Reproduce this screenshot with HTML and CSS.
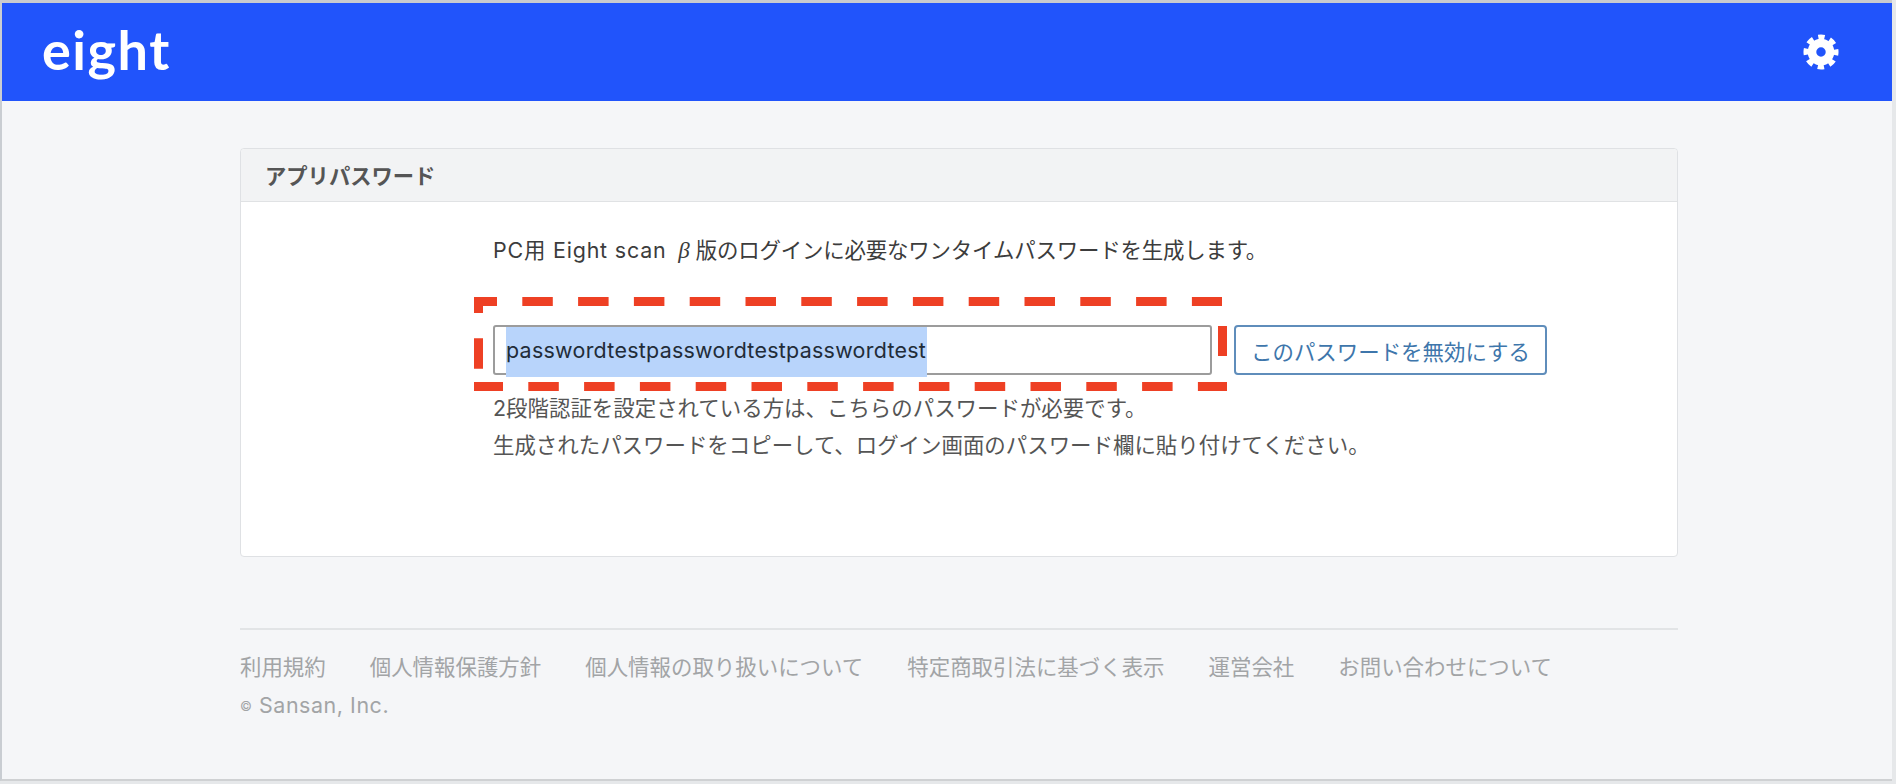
FILE: index.html
```html
<!DOCTYPE html>
<html lang="ja">
<head>
<meta charset="utf-8">
<title>アプリパスワード</title>
<link rel="stylesheet" href="styles.css">
</head>
<body>
<div class="window">
  <header class="topbar">
    <a class="logo">eight</a>
    <svg class="gear" viewBox="0 0 38 38" aria-hidden="true">
      <circle class="gear-ring" cx="19" cy="19" r="9.5"/>
      <circle class="gear-teeth" cx="19" cy="19" r="15.5"/>
    </svg>
  </header>
  <main class="content">
    <section class="card">
      <h1 class="card-head">アプリパスワード</h1>
      <div class="card-body">
        <p class="lead"><span class="lead-latin">PC用 Eight scan </span><i class="beta">β</i><span class="lead-ja">版のログインに必要なワンタイムパスワードを生成します。</span></p>
        <div class="form-row">
          <div class="field"><span class="selected">passwordtestpasswordtestpasswordtest</span></div>
          <button class="btn">このパスワードを無効にする</button>
        </div>
        <p class="note">2段階認証を設定されている方は、こちらのパスワードが必要です。</p>
        <p class="note">生成されたパスワードをコピーして、ログイン画面のパスワード欄に貼り付けてください。</p>
      </div>
    </section>
    <footer class="foot">
      <nav class="foot-links">
        <a>利用規約</a>
        <a>個人情報保護方針</a>
        <a>個人情報の取り扱いについて</a>
        <a>特定商取引法に基づく表示</a>
        <a>運営会社</a>
        <a>お問い合わせについて</a>
      </nav>
      <p class="copy"><span class="copy-mark">©</span> Sansan, Inc.</p>
    </footer>
  </main>
  <svg class="callout" viewBox="0 0 1896 784" aria-hidden="true">
    <line class="dash dash-top" x1="474" y1="301.5" x2="1222" y2="301.5"/>
    <line class="dash dash-left" x1="478.5" y1="297" x2="478.5" y2="382"/>
    <line class="dash dash-right" x1="1222.5" y1="326" x2="1222.5" y2="356"/>
    <line class="dash dash-bottom" x1="474" y1="386.5" x2="1227" y2="386.5"/>
  </svg>
</div>
</body>
</html>
```
FILE: styles.css
```css
* { box-sizing: border-box; }
html, body { margin: 0; height: 100%; }
body {
  overflow: hidden;
  background: #e6e8ea;
  font-family: Inter, "Noto Sans CJK JP", sans-serif;
  font-size: 21.45px;
  color: #3c3c3c;
}
.window {
  position: relative;
  width: 1892px;
  height: 781px;
  border-top: 3px solid #c9cbce;
  border-left: 2px solid #c9cdd2;
  border-bottom: 2px solid #cfd1d3;
  background: #f5f6f8;
}
.topbar {
  display: flex;
  align-items: center;
  justify-content: space-between;
  height: 98px;
  padding: 0 53px 0 40px;
  background: #2154fb;
}
.logo {
  font-family: Lato, sans-serif;
  font-weight: 700;
  font-size: 54px;
  letter-spacing: 1.5px;
  line-height: 1;
  color: #fff;
  margin-top: -4px;
}
.gear { width: 36px; height: 36px; }
.gear-ring { fill: none; stroke: #fff; stroke-width: 9; }
.gear-teeth { fill: none; stroke: #fff; stroke-width: 6; stroke-dasharray: 6.6 5.57; stroke-dashoffset: 3.3; }
.content { padding: 47px 0 0 238px; width: 1676px; }
.card {
  height: 409px;
  background: #fff;
  border: 1px solid #dfe1e4;
  border-radius: 4px;
}
.card-head {
  margin: 0;
  height: 53px;
  padding-left: 24px;
  background: #f2f3f4;
  border-bottom: 1px solid #e0e2e4;
  border-radius: 4px 4px 0 0;
  font-size: 21.3px;
  font-weight: 700;
  line-height: 54px;
  color: #555;
}
.card-body { padding: 30px 0 0 252px; }
.lead { margin: 0 0 56px; line-height: 36px; color: #3c3c3c; white-space: nowrap; }
.lead-latin { letter-spacing: 0.8px; }
.lead-ja { letter-spacing: -0.18px; }
.beta { font-family: "Liberation Serif", serif; font-size: 23px; margin-left: 5px; margin-right: 6px; }
.form-row { display: flex; gap: 22px; height: 50px; margin-bottom: 15px; }
.field {
  width: 719px;
  height: 50px;
  padding-left: 11px;
  background: #fff;
  border: 2px solid #9c9c9c;
  border-radius: 3px;
}
.selected {
  display: block;
  width: 421px;
  height: 50px;
  line-height: 46px;
  letter-spacing: 0.27px;
  white-space: nowrap;
  background: #b8d4fb;
  color: #222c38;
}
.btn {
  width: 313px;
  height: 50px;
  padding: 0;
  font: inherit;
  color: #3e76ab;
  background: #fff;
  border: 2px solid #5f8dbb;
  border-radius: 4px;
}
.note { margin: 0; line-height: 36.5px; color: #555; }
.foot { margin-top: 71px; padding-top: 19px; border-top: 2px solid #e2e4e6; }
.foot-links { display: flex; gap: 44px; line-height: 36px; color: #a2a4a6; }
.copy { margin: 2px 0 0; line-height: 36px; color: #a2a4a6; letter-spacing: 0.55px; }
.copy-mark { font-size: 13px; vertical-align: 2px; }
.callout { position: absolute; left: -2px; top: -3px; width: 1896px; height: 784px; pointer-events: none; }
.dash { stroke: #ee4024; stroke-width: 9; fill: none; }
.dash-top { stroke-dasharray: 30.5 25.3; stroke-dashoffset: 7.5; }
.dash-left { stroke-dasharray: 30.5 25.3; stroke-dashoffset: 14.5; }
.dash-bottom { stroke-dasharray: 30.5 25.3; stroke-dashoffset: 1.5; }
```
